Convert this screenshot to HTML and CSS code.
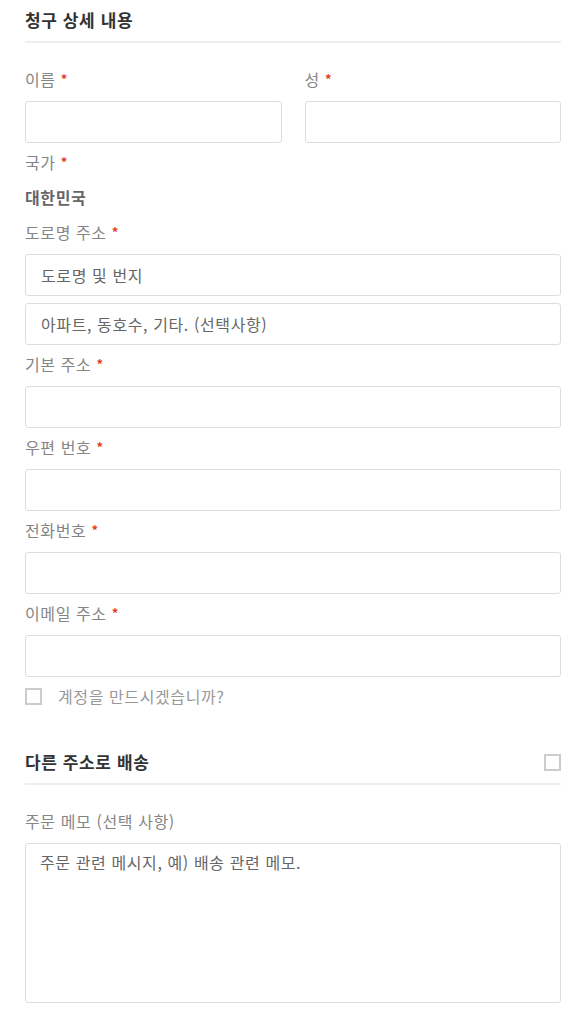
FILE: index.html
```html
<!DOCTYPE html>
<html lang="ko">
    <head>
        <meta charset="UTF-8" />
        <title>청구 상세 내용</title>
        <link rel="stylesheet" href="styles.css">
    </head>
    <body>
        <div class="checkout">
            <!-- Billing details -->
            <h3 class="section-title">청구 상세 내용</h3>

            <div class="field-pair">
                <div class="field">
                    <label for="firstName">이름 <abbr class="required">*</abbr></label>
                    <input type="text" id="firstName" class="text-input" />
                </div>
                <div class="field">
                    <label for="lastName">성 <abbr class="required">*</abbr></label>
                    <input type="text" id="lastName" class="text-input" />
                </div>
            </div>

            <div class="field">
                <label>국가 <abbr class="required">*</abbr></label>
                <strong class="country">대한민국</strong>
            </div>

            <div class="field">
                <label for="address1">도로명 주소 <abbr class="required">*</abbr></label>
                <input type="text" id="address1" class="text-input"
                    placeholder="도로명 및 번지" />
                <input type="text" id="address2" class="text-input extra"
                    placeholder="아파트, 동호수, 기타. (선택사항)" />
            </div>

            <div class="field">
                <label for="city">기본 주소 <abbr class="required">*</abbr></label>
                <input type="text" id="city" class="text-input" />
            </div>

            <div class="field">
                <label for="postcode">우편 번호 <abbr class="required">*</abbr></label>
                <input type="text" id="postcode" class="text-input" />
            </div>

            <div class="field">
                <label for="phone">전화번호 <abbr class="required">*</abbr></label>
                <input type="tel" id="phone" class="text-input" />
            </div>

            <div class="field">
                <label for="email">이메일 주소 <abbr class="required">*</abbr></label>
                <input type="email" id="email" class="text-input" />
            </div>

            <label class="check-row">
                <input type="checkbox" class="check-box" />
                <span>계정을 만드시겠습니까?</span>
            </label>

            <!-- Shipping -->
            <h3 class="section-title ship-title">
                <span>다른 주소로 배송</span>
                <input type="checkbox" class="check-box" />
            </h3>

            <div class="field">
                <label for="orderNotes">주문 메모 (선택 사항)</label>
                <textarea id="orderNotes" class="notes"
                    placeholder="주문 관련 메시지, 예) 배송 관련 메모."></textarea>
            </div>
        </div>
    </body>
</html>
```

FILE: styles.css
```css
/* --- Basic Reset --- */
* {
  margin: 0;
  padding: 0;
  box-sizing: border-box;
}

body {
  background-color: #fff;
  font-family: "Noto Sans CJK KR", "Noto Sans", sans-serif;
  font-size: 16px;
  letter-spacing: 0.6px;
  color: #777;
}

.checkout {
  padding: 0 25px;
}

/* --- Section headings --- */
.section-title {
  font-size: 17px;
  line-height: 24px;
  font-weight: bold;
  letter-spacing: 0.6px;
  color: #333;
  padding: 8px 0 9px;
  border-bottom: 2px solid #eee;
  margin-bottom: 24px;
}

.ship-title {
  display: flex;
  justify-content: space-between;
  align-items: center;
  margin-top: 34px;
}

/* --- Fields --- */
.field-pair {
  display: grid;
  grid-template-columns: 1fr 1fr;
  gap: 23px;
}

.field {
  display: flex;
  flex-direction: column;
  margin-bottom: 7px;
}

.field label {
  display: block;
  height: 24px;
  line-height: 24px;
  margin-bottom: 10px;
  color: #858585;
}

.required {
  color: #e2401c;
  text-decoration: none;
  font-weight: bold;
  font-size: 13px;
  line-height: 1;
  vertical-align: 2px;
}

.country {
  height: 24px;
  line-height: 24px;
  color: #666;
  font-weight: bold;
  margin-top: 1px;
  margin-bottom: 4px;
}

.text-input,
.notes {
  width: 100%;
  height: 42px;
  border: 1px solid #ddd;
  border-radius: 3px;
  padding: 0 15px;
  font-family: inherit;
  font-size: 16px;
  letter-spacing: 0.6px;
  color: #555;
  background-color: #fff;
  outline: none;
}

.text-input::placeholder,
.notes::placeholder {
  color: #666;
  opacity: 1;
}

.text-input.extra {
  margin-top: 7px;
}

.notes {
  height: 160px;
  padding: 5px 14px;
  line-height: 26px;
  resize: none;
}

/* --- Checkboxes --- */
.check-row {
  display: flex;
  align-items: center;
  gap: 16px;
  height: 24px;
  line-height: 24px;
  color: #999;
}

.check-box {
  appearance: none;
  -webkit-appearance: none;
  width: 17px;
  height: 17px;
  border: 2px solid #ccc;
  background-color: #fff;
  flex-shrink: 0;
}
```
